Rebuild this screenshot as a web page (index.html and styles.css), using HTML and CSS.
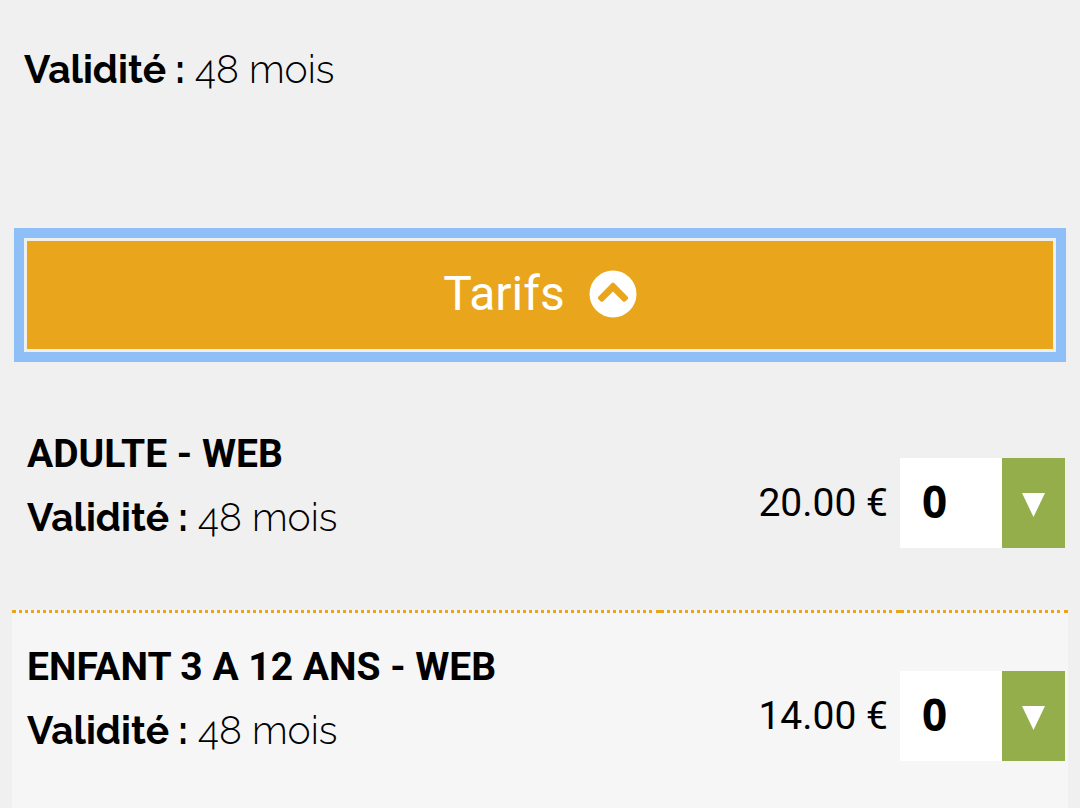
FILE: index.html
```
<!DOCTYPE html>
<html lang="fr">
<head>
    <meta charset="UTF-8">
    <meta name="viewport" content="width=device-width, initial-scale=1.0">
    <title>Tarifs</title>
    <link rel="stylesheet" href="styles.css">
</head>
<body>
    <p class="validity intro"><strong>Validité :</strong> 48 mois</p>

    <button type="button" class="rates-button" aria-expanded="true" aria-controls="rates">
        <span>Tarifs</span>
        <svg class="chevron" viewBox="0 0 48 48" aria-hidden="true">
            <circle cx="24" cy="24" r="23.5" fill="#fff"/>
            <path d="M9.3 26.8 22.6 13.2Q24 11.8 25.4 13.2L38.7 26.8Q39.7 28 38.7 29.2L36.2 31.4Q35 32.2 33.8 31.2L24 21.4 14.2 31.2Q13 32.2 11.8 31.4L9.3 29.2Q8.3 28 9.3 26.8Z" fill="#e9a51b"/>
        </svg>
    </button>

    <table id="rates" class="rates">
        <tbody>
            <tr>
                <td class="rate">
                    <label class="rate-name" for="qtyAdult">ADULTE - WEB</label>
                    <p class="validity"><strong>Validité :</strong> 48 mois</p>
                </td>
                <td class="price">20.00 €</td>
                <td class="quantity">
                    <div class="select-wrapper">
                        <select id="qtyAdult" name="qtyAdult">
                            <option>0</option>
                            <option>1</option>
                            <option>2</option>
                            <option>3</option>
                            <option>4</option>
                        </select>
                    </div>
                </td>
            </tr>
            <tr>
                <td class="rate">
                    <label class="rate-name" for="qtyChild">ENFANT 3 A 12 ANS - WEB</label>
                    <p class="validity"><strong>Validité :</strong> 48 mois</p>
                </td>
                <td class="price">14.00 €</td>
                <td class="quantity">
                    <div class="select-wrapper">
                        <select id="qtyChild" name="qtyChild">
                            <option>0</option>
                            <option>1</option>
                            <option>2</option>
                            <option>3</option>
                            <option>4</option>
                        </select>
                    </div>
                </td>
            </tr>
        </tbody>
    </table>
</body>
</html>
```
FILE: styles.css
```
body {
    font-family: Roboto, sans-serif;
    font-size: 39px;
    line-height: 63px;
    background-color: #f0f0f0;
    color: #000;
    margin: 0;
    padding: 38px 12px 0;
}

.validity {
    font-family: Raleway, Lato, sans-serif;
    font-weight: 300;
    margin: 0;
}

.validity strong {
    font-weight: 700;
}

.intro {
    margin: 0 12px 137px;
}

.rates-button {
    display: flex;
    align-items: center;
    justify-content: center;
    gap: 24px;
    width: calc(100% - 24px);
    height: 114px;
    margin: 0 12px 45px;
    padding: 0 0 3px;
    background-color: #e9a51b;
    color: #fff;
    border: 3px solid #f0f0ea;
    outline: 10px solid #8ec0f7;
    font-family: inherit;
    font-size: 48px;
    cursor: pointer;
}

.chevron {
    width: 48px;
    height: 48px;
}

.rates {
    width: 100%;
    border-collapse: separate;
    border-spacing: 0;
}

.rates td {
    border-top: 3px solid transparent;
    padding: 0 0 4px;
}

.rates tr + tr td {
    border-top: 3px dotted #e9a51b;
}

.rates tr:nth-child(even) {
    background-color: #f6f6f6;
}

.rates td.rate {
    padding: 23px 15px 61px;
    vertical-align: top;
}

.rate-name {
    display: block;
    font-weight: 700;
}

.rates td.price {
    width: 240px;
    padding-right: 12px;
    box-sizing: border-box;
    text-align: right;
    white-space: nowrap;
}

.rates td.quantity {
    width: 168px;
    box-sizing: border-box;
}

.select-wrapper {
    position: relative;
    width: 165px;
    height: 90px;
}

.select-wrapper::after {
    content: "";
    position: absolute;
    top: 35px;
    right: 20px;
    width: 23px;
    height: 24px;
    background-color: #fff;
    clip-path: polygon(0 0, 100% 0, 50% 100%);
    pointer-events: none;
}

select {
    appearance: none;
    display: block;
    width: 100%;
    height: 100%;
    padding: 0 63px 5px 22px;
    border: none;
    border-radius: 0;
    background: linear-gradient(#95ae4c, #95ae4c) right / 63px 100% no-repeat #fff;
    color: #000;
    font-family: "Noto Sans", sans-serif;
    font-size: 44px;
    font-weight: 700;
    cursor: pointer;
}
```
